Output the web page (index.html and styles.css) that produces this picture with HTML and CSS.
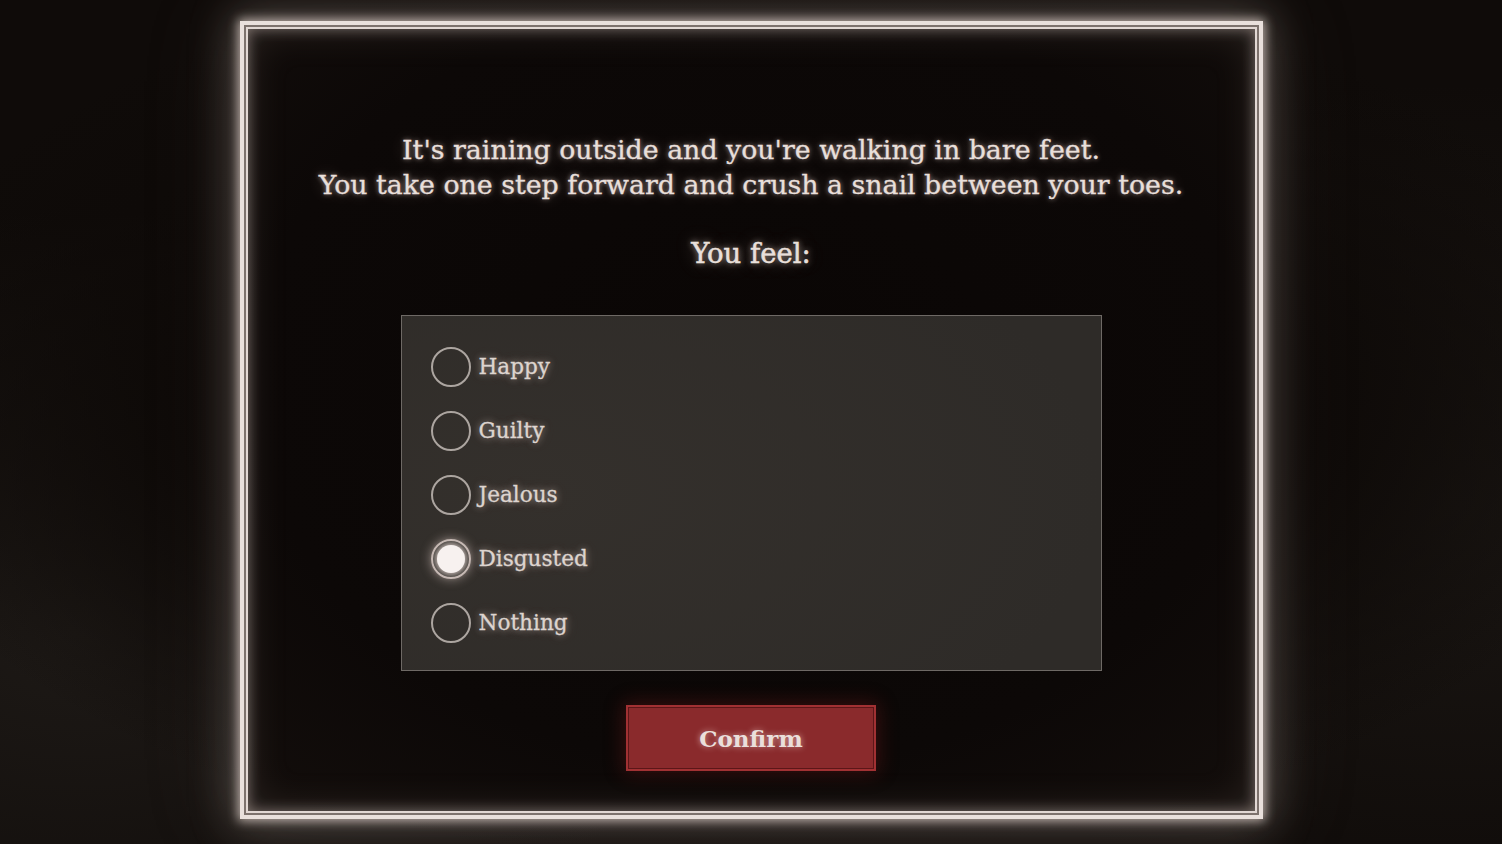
FILE: index.html
```html
<!DOCTYPE html>
<html lang="en">
<head>
<meta charset="utf-8">
<title>You feel</title>
<link rel="stylesheet" href="styles.css">
</head>
<body>
  <main class="frame">
    <p class="prompt">It's raining outside and you're walking in bare feet.<br>You take one step forward and crush a snail between your toes.</p>
    <h2 class="question">You feel:</h2>
    <form class="choices">
      <label class="choice"><input type="radio" name="feel" value="happy"><span class="dot"></span><span class="label">Happy</span></label>
      <label class="choice"><input type="radio" name="feel" value="guilty"><span class="dot"></span><span class="label">Guilty</span></label>
      <label class="choice"><input type="radio" name="feel" value="jealous"><span class="dot"></span><span class="label">Jealous</span></label>
      <label class="choice"><input type="radio" name="feel" value="disgusted" checked><span class="dot"></span><span class="label">Disgusted</span></label>
      <label class="choice"><input type="radio" name="feel" value="nothing"><span class="dot"></span><span class="label">Nothing</span></label>
    </form>
    <button class="confirm" type="button">Confirm</button>
  </main>
</body>
</html>
```
FILE: styles.css
```css
html, body {
  margin: 0;
  height: 100%;
}

body {
  background:
    radial-gradient(ellipse 60% 55% at 50% 48%, #0b0706 0%, #0d0907 60%, rgba(13,9,7,0) 100%),
    radial-gradient(ellipse 40% 50% at 5% 75%, #1d1916 0%, rgba(29,25,22,0) 100%),
    radial-gradient(ellipse 40% 50% at 97% 60%, #1a1613 0%, rgba(26,22,19,0) 100%),
    #0f0b09;
  font-family: "DejaVu Serif", "Liberation Serif", serif;
  color: #e8dfda;
  display: flex;
  justify-content: center;
  align-items: flex-start;
  overflow: hidden;
}

/* Glowing double-ruled frame */
.frame {
  box-sizing: border-box;
  width: 1023px;
  height: 798px;
  margin-top: 21px;
  border: 4px solid #e9e0dc;
  background: radial-gradient(ellipse 70% 70% at 50% 45%, #0a0605 0%, #0c0807 70%, #120d0b 100%);
  box-shadow:
    inset 0 0 0 2px #7d726d,
    inset 0 0 0 4px #e2d8d4,
    inset 0 0 14px 4px rgba(235, 220, 212, 0.45),
    inset 0 0 40px 4px rgba(190, 172, 162, 0.16),
    0 0 10px 2px rgba(240, 225, 218, 0.7),
    0 0 40px 8px rgba(200, 184, 176, 0.3),
    0 0 90px 10px rgba(150, 135, 128, 0.12);
  display: flex;
  flex-direction: column;
  align-items: center;
  padding-top: 107px;
}

.prompt {
  margin: 0;
  font-size: 26.8px;
  line-height: 35px;
  text-align: center;
  -webkit-text-stroke: 0.3px #e8dfda;
  text-shadow: 0 0 5px rgba(255, 236, 228, 0.6), 0 0 16px rgba(255, 230, 220, 0.3);
}

.question {
  margin: 33px 0 0;
  font-size: 27.5px;
  line-height: 36px;
  font-weight: normal;
  -webkit-text-stroke: 0.5px #ece3de;
  text-shadow: 0 0 6px rgba(255, 236, 228, 0.65), 0 0 18px rgba(255, 230, 220, 0.35);
}

.choices {
  box-sizing: border-box;
  width: 701px;
  height: 356px;
  margin-top: 44px;
  padding: 31px 29px 0;
  background: radial-gradient(ellipse 80% 90% at 20% 50%, #34302c 0%, #2e2b28 100%);
  border: 1px solid #6e6965;
  display: flex;
  flex-direction: column;
  gap: 24px;
}

.choice {
  display: flex;
  align-items: center;
  height: 40px;
  gap: 8px;
  cursor: pointer;
}

.choice input {
  display: none;
}

.dot {
  box-sizing: border-box;
  width: 40px;
  height: 40px;
  border-radius: 50%;
  border: 2px solid #aca5a0;
  flex: none;
  display: flex;
  align-items: center;
  justify-content: center;
}

.choice input:checked + .dot {
  border-color: #bfb2ad;
  box-shadow: 0 0 10px 2px rgba(235, 215, 208, 0.35);
}

.choice input:checked + .dot::after {
  content: "";
  width: 28px;
  height: 28px;
  border-radius: 50%;
  background: #f7f1ef;
  box-shadow: 0 0 6px 2px rgba(255, 240, 235, 0.75);
}

.label {
  font-size: 21.6px;
  line-height: 30px;
  color: #ddd4cf;
  -webkit-text-stroke: 0.3px #ddd4cf;
  text-shadow: 0 0 6px rgba(255, 236, 228, 0.5), 0 0 14px rgba(255, 230, 220, 0.22);
}

.confirm {
  box-sizing: border-box;
  width: 250px;
  height: 66px;
  margin-top: 34px;
  background: #8a2a2c;
  border: 2px solid #a13133;
  box-shadow:
    inset 0 0 0 1px #5c1618,
    0 0 18px 2px rgba(140, 30, 30, 0.35);
  font-family: "DejaVu Serif", "Liberation Serif", serif;
  font-size: 23px;
  font-weight: bold;
  color: #eadfdb;
  text-shadow: 0 0 6px rgba(255, 236, 228, 0.6);
  cursor: pointer;
}
```
